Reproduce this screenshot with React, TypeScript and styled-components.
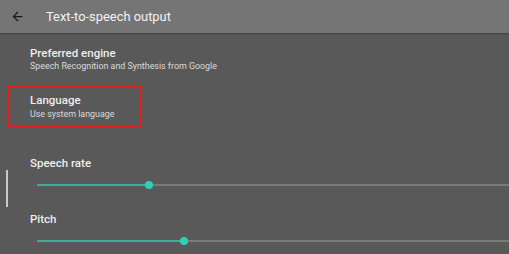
import React from 'react';
import styled, { createGlobalStyle } from 'styled-components';

const GlobalStyle = createGlobalStyle`
  html, body {
    margin: 0;
    padding: 0;
    background: #595959;
    font-family: Roboto, 'Noto Sans', sans-serif;
    overflow: hidden;
  }
`;

interface ISliderRow {
  label: string;
  value: number;
  focused?: boolean;
}

const SliderRow = ({ label, value, focused }: ISliderRow) => {
  return (
    <SliderWrapper>
      {focused && <FocusBar />}
      <ItemTitle>{label}</ItemTitle>
      <Track>
        <Filled style={{ width: `${value}%` }} />
        <Thumb />
        <Rest />
      </Track>
    </SliderWrapper>
  );
};

const App = () => {
  return (
    <>
      <GlobalStyle />
      <Screen>
        <Header>
          <BackButton>
            <svg width="15" height="15" viewBox="0 0 24 24">
              <path d="M20 11H7.83l5.59-5.59L12 4l-8 8 8 8 1.41-1.41L7.83 13H20v-2z" fill="#1a1a1a" />
            </svg>
          </BackButton>
          <HeaderTitle>Text-to-speech output</HeaderTitle>
        </Header>
        <List>
          <Item>
            <ItemTitle>Preferred engine</ItemTitle>
            <ItemSub>Speech Recognition and Synthesis from Google</ItemSub>
          </Item>
          <HighlightItem>
            <ItemTitle>Language</ItemTitle>
            <ItemSub>Use system language</ItemSub>
          </HighlightItem>
          <SliderRow label="Speech rate" value={23.7} focused />
          <SliderRow label="Pitch" value={31.1} />
        </List>
      </Screen>
    </>
  );
};

const Screen = styled.div`
  width: 509px;
  height: 254px;
  background: #595959;
  display: flex;
  flex-direction: column;
`;

const Header = styled.div`
  height: 33px;
  flex-shrink: 0;
  background: #757575;
  display: flex;
  align-items: center;
  box-shadow: 0 1px 1.5px rgba(0, 0, 0, 0.3);
  position: relative;
  z-index: 1;
`;

const BackButton = styled.div`
  width: 15px;
  height: 15px;
  margin-left: 10px;
  display: flex;
`;

const HeaderTitle = styled.span`
  margin-left: 21px;
  font-size: 12.9px;
  color: #f2f2f2;
  line-height: 16px;
  padding-top: 1px;
`;

const List = styled.div`
  display: flex;
  flex-direction: column;
  padding-top: 13px;
`;

const Item = styled.div`
  display: flex;
  flex-direction: column;
  padding-left: 30px;
`;

const HighlightItem = styled(Item)`
  margin: 13px 0 0 7px;
  width: 110px;
  padding: 6px 0 6px 21px;
  border: 2px solid #e3201f;

  & > span + span {
    margin-top: 1px;
  }
`;

const ItemTitle = styled.span`
  font-size: 11.5px;
  font-weight: 500;
  color: #ededed;
  line-height: 14px;
`;

const ItemSub = styled.span`
  font-size: 8.9px;
  color: #d9d9d9;
  line-height: 12px;
`;

const SliderWrapper = styled.div`
  position: relative;
  display: flex;
  flex-direction: column;
  padding-left: 30px;
  margin-top: 28px;

  & + & {
    margin-top: 22px;
  }
`;

const FocusBar = styled.div`
  position: absolute;
  left: 6px;
  top: 14px;
  width: 2px;
  height: 37px;
  background: #c8c8c8;
`;

const Track = styled.div`
  display: flex;
  align-items: center;
  margin-left: 7px;
  margin-top: 10px;
  height: 10px;
`;

const Filled = styled.div`
  height: 2px;
  background: #3fab9a;
`;

const Thumb = styled.div`
  width: 8px;
  height: 8px;
  border-radius: 50%;
  background: #2ecfb5;
  margin: 0 -4px;
  position: relative;
  z-index: 1;
`;

const Rest = styled.div`
  flex: 1;
  height: 2px;
  background: #7a7a7a;
`;

export default App;
